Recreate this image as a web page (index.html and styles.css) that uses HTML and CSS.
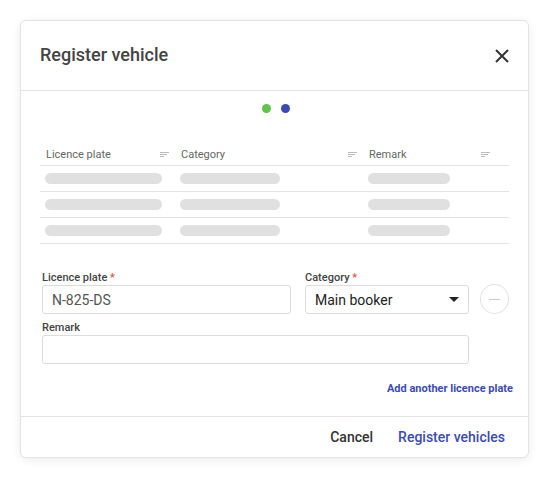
FILE: index.html
```html
<!DOCTYPE html>
<html lang="en">
<head>
  <meta charset="UTF-8">
  <meta name="viewport" content="width=device-width, initial-scale=1.0">
  <title>Register vehicle</title>
  <link rel="stylesheet" href="styles.css">
</head>
<body>

  <div class="dialog">
    <div class="dialog-header">
      <h1>Register vehicle</h1>
      <button class="close" aria-label="Close">
        <svg width="14" height="14" viewBox="0 0 14 14"><path d="M1 1L13 13M13 1L1 13" stroke="#333" stroke-width="2" fill="none"/></svg>
      </button>
    </div>

    <div class="dialog-body">
      <div class="steps">
        <span class="dot done"></span>
        <span class="dot active"></span>
      </div>

      <table class="list">
        <thead>
          <tr>
            <th class="col-plate">Licence plate <span class="sort"></span></th>
            <th class="col-cat">Category <span class="sort"></span></th>
            <th class="col-remark">Remark <span class="sort"></span></th>
          </tr>
        </thead>
        <tbody>
          <tr><td><div class="skel w1"></div></td><td><div class="skel w2"></div></td><td><div class="skel w3"></div></td></tr>
          <tr><td><div class="skel w1"></div></td><td><div class="skel w2"></div></td><td><div class="skel w3"></div></td></tr>
          <tr><td><div class="skel w1"></div></td><td><div class="skel w2"></div></td><td><div class="skel w3"></div></td></tr>
        </tbody>
      </table>

      <div class="form">
        <div class="form-row">
          <div class="field plate">
            <label>Licence plate <span class="req">*</span></label>
            <input type="text" value="N-825-DS">
          </div>
          <div class="field category">
            <label>Category <span class="req">*</span></label>
            <div class="select">Main booker <span class="caret"></span></div>
          </div>
          <button class="remove" aria-label="Remove"><span></span></button>
        </div>
        <div class="field remark">
          <label>Remark</label>
          <input type="text">
        </div>
      </div>

      <div class="add-link"><a href="#">Add another licence plate</a></div>
    </div>

    <div class="dialog-footer">
      <button class="btn cancel">Cancel</button>
      <button class="btn primary">Register vehicles</button>
    </div>
  </div>

</body>
</html>
```

FILE: styles.css
```css
body {
  background-color: #fff;
  font-family: Roboto, "Liberation Sans", Arial, sans-serif;
  color: #333;
  margin: 0;
  padding: 20px;
}

.dialog {
  width: 507px;
  border: 1px solid #e3e3e3;
  border-radius: 6px;
  box-shadow: 0 2px 10px rgba(0, 0, 0, 0.08);
  background: #fff;
}

.dialog-header {
  height: 69px;
  display: flex;
  align-items: center;
  justify-content: space-between;
  padding: 0 19px 0 19px;
  border-bottom: 1px solid #e2e2e2;
}

.dialog-header h1 {
  margin: 0;
  font-size: 18px;
  font-weight: 500;
  color: #444;
  padding-bottom: 2px;
}

.close {
  background: none;
  border: none;
  padding: 0;
  width: 14px;
  height: 14px;
  cursor: pointer;
}

.dialog-body {
  padding: 13px 19px 0 19px;
}

.steps {
  display: flex;
  justify-content: center;
  gap: 10px;
  padding-left: 2px;
}

.dot {
  width: 9px;
  height: 9px;
  border-radius: 50%;
}

.dot.done { background-color: #5ec54a; }
.dot.active { background-color: #3a4bb8; }

.list {
  width: 469px;
  margin-top: 24px;
  border-collapse: collapse;
}

.list th {
  text-align: left;
  font-size: 11px;
  font-weight: 400;
  color: #666;
  height: 24px;
  padding: 0 6px 4px 6px;
  border-bottom: 1px solid #e2e2e2;
  vertical-align: bottom;
}

.col-plate { width: 123px; }
.col-cat { width: 176px; }
.list th.col-remark { padding-right: 19px; }

.sort {
  float: right;
  width: 9px;
  height: 6px;
  margin-top: 4px;
  background:
    linear-gradient(#bbb, #bbb) 0 0 / 9px 1px no-repeat,
    linear-gradient(#bbb, #bbb) 0 2px / 7px 1px no-repeat,
    linear-gradient(#bbb, #bbb) 0 4px / 4px 1px no-repeat;
}

.list td {
  height: 25px;
  padding: 0 6px 0 5px;
  border-bottom: 1px solid #e2e2e2;
}

.skel {
  height: 11px;
  border-radius: 6px;
  background-color: #e0e0e0;
}

.w1 { width: 117px; }
.w2 { width: 100px; }
.w3 { width: 82px; }

.form {
  margin-top: 27px;
  padding-left: 2px;
}

.form-row {
  display: flex;
  align-items: flex-end;
}

.field label {
  display: block;
  font-size: 11px;
  font-weight: 500;
  color: #444;
  margin-bottom: 1px;
}

.req { color: #e5533d; }

.field input,
.select {
  box-sizing: border-box;
  height: 29px;
  border: 1px solid #dcdcdc;
  border-radius: 3px;
  font-family: inherit;
  font-size: 14px;
  padding: 0 9px;
  outline: none;
}

.field input { color: #555; }

.plate input { width: 249px; }

.category { margin-left: 14px; }

.select {
  width: 164px;
  display: flex;
  align-items: center;
  justify-content: space-between;
  color: #222;
}

.caret {
  width: 0;
  height: 0;
  border-left: 5px solid transparent;
  border-right: 5px solid transparent;
  border-top: 5px solid #222;
}

.remove {
  width: 30px;
  height: 30px;
  margin-left: 11px;
  border: 1px solid #e2e2e2;
  border-radius: 50%;
  background: #fff;
  display: flex;
  align-items: center;
  justify-content: center;
  padding: 0;
}

.remove span {
  width: 11px;
  height: 1px;
  background-color: #ccc;
}

.remark { margin-top: 7px; }

.remark input { width: 427px; }

.add-link {
  text-align: right;
  margin-top: 13px;
  height: 39px;
}

.add-link a {
  font-size: 11px;
  font-weight: 700;
  color: #3a4bb8;
  text-decoration: none;
  margin-right: -4px;
}

.dialog-footer {
  border-top: 1px solid #e2e2e2;
  height: 40px;
  display: flex;
  justify-content: flex-end;
  align-items: center;
  gap: 25px;
  padding-right: 23px;
}

.btn {
  background: none;
  border: none;
  padding: 0;
  font-family: inherit;
  font-size: 14px;
  font-weight: 500;
  cursor: pointer;
}

.btn.cancel { color: #333; }
.btn.primary { color: #3a4bb8; }
```
